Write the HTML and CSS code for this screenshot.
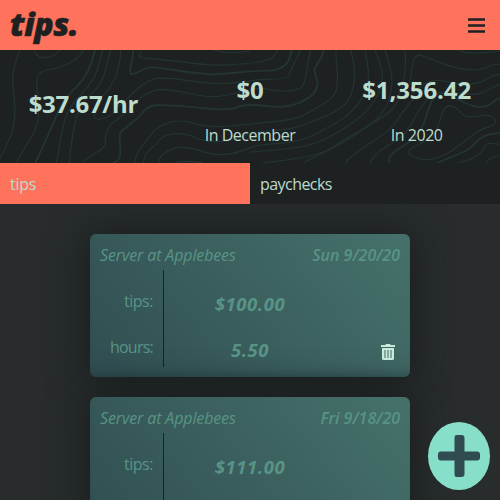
FILE: index.html
```html
<!DOCTYPE html>
<html lang="en">
<head>
<meta charset="utf-8">
<title>tips.</title>
<link rel="stylesheet" href="styles.css">
</head>
<body>
<header class="topbar">
  <h1 class="logo">tips.</h1>
  <svg class="menu" viewBox="0 0 17 15"><path d="M0 1.5h17M0 7.5h17M0 13.5h17"/></svg>
</header>
<section class="summary">
  <svg class="contours" viewBox="0 15 1500 339" preserveAspectRatio="none">
    <path d="M58 15C50 50 35 75 38 110S50 190 42 235S15 310 0 340"/>
    <path d="M102 15C110 45 155 45 180 15"/>
    <path d="M250 15C235 50 180 70 140 75C100 85 112 115 112 150S122 220 105 255S65 320 50 354"/>
    <path class="major" d="M285 15C275 60 260 95 235 120S190 160 170 210S130 300 106 354"/>
    <path d="M308 15C295 65 290 95 260 130S205 180 190 240S180 320 168 354"/>
    <path d="M332 15C320 60 315 110 280 140S230 200 220 260S210 320 208 354"/>
    <path d="M362 15C360 80 335 130 300 160C285 190 275 220 290 222C330 225 340 200 360 180C400 150 420 110 470 100C530 95 600 120 680 115S760 103 800 103S865 100 867 90S890 40 902 15"/>
    <path class="major" d="M399 15C400 40 385 80 392 86C410 95 420 65 460 67C520 72 570 87 640 88C700 86 740 77 800 77S870 45 875 15"/>
    <path d="M425 15C410 40 420 40 450 40C530 45 600 65 680 60S790 52 815 40L835 15"/>
    <path d="M640 15C680 25 700 25 750 18"/>
    <path d="M250 354C260 330 310 320 315 300C315 260 325 240 350 225C400 190 420 140 480 133C550 135 580 155 640 155S750 122 800 132S900 140 910 120S920 60 932 15"/>
    <path class="major" d="M340 354C375 340 355 310 360 265C380 240 420 220 430 200C450 175 480 180 520 182C600 185 650 200 700 190C735 175 770 180 820 185S945 165 952 120C957 100 938 90 945 70S970 40 970 15"/>
    <path d="M403 354C410 310 440 290 460 260C490 230 540 220 580 235C640 255 720 240 790 233S890 225 940 195S1010 160 1012 110S1006 50 1008 15"/>
    <path d="M430 354C435 315 460 310 475 290C495 260 550 260 590 280C640 300 690 290 740 270S850 265 910 240S1030 200 1050 155S1065 60 1052 15"/>
    <path d="M475 354C475 330 510 310 540 307C590 305 600 325 650 328S720 318 760 305S880 302 940 270S1050 220 1085 160S1100 50 1095 15"/>
    <path d="M525 353Q560 345 605 353"/>
    <path d="M750 321C830 315 920 310 970 285S1100 215 1130 155S1145 70 1125 15"/>
    <path d="M785 354C850 345 950 340 1000 305S1145 235 1165 170S1175 80 1155 15"/>
    <path d="M910 354C970 320 1030 300 1080 260S1180 210 1195 160S1220 90 1215 15"/>
    <path d="M1035 354C1070 310 1150 280 1180 240S1210 200 1240 160"/>
    <path d="M1110 354C1130 310 1180 300 1210 270S1250 190 1290 155S1400 160 1440 145S1480 125 1500 118"/>
    <path class="major" d="M1170 354C1155 325 1210 310 1240 280C1280 255 1280 170 1310 150S1385 180 1430 185S1475 165 1500 160"/>
    <path d="M1230 120C1230 90 1240 60 1240 45C1250 20 1275 35 1300 45S1370 75 1420 75S1465 55 1500 58"/>
    <path d="M1372 15C1400 30 1450 25 1500 18"/>
    <path d="M1240 145C1270 110 1300 100 1340 110S1430 120 1455 105S1485 90 1500 88"/>
    <path d="M1230 330C1210 310 1265 300 1295 275S1320 180 1350 182S1375 215 1410 215S1460 205 1475 215S1495 240 1460 248S1400 290 1350 320S1270 350 1230 330Z"/>
    <path class="major" d="M1310 354C1350 335 1400 325 1425 295S1470 270 1500 263"/>
    <path d="M1370 354C1410 345 1440 335 1450 310S1480 300 1500 297M1455 354Q1475 335 1500 330"/>
  </svg>
  <div class="stat rate"><strong>$37.67/hr</strong></div>
  <div class="stat"><strong>$0</strong><span>In December</span></div>
  <div class="stat"><strong class="year">$1,356.42</strong><span>In 2020</span></div>
</section>
<nav class="tabs"><a class="tab active">tips</a><a class="tab">paychecks</a></nav>
<main class="list">
  <article class="card">
    <div class="card-head"><em class="job">Server at Applebees</em><em class="date">Sun 9/20/20</em></div>
    <div class="card-body">
      <div class="labels"><span>tips:</span><span class="hours">hours:</span></div>
      <div class="values"><em>$100.00</em><em>5.50</em></div>
      <svg class="trash" viewBox="0 0 14 16"><path class="solid" d="M0 1h4.2L5 0h4l.8 1H14v2H0zM1 4h12v10.5a1.5 1.5 0 0 1-1.5 1.5h-9A1.5 1.5 0 0 1 1 14.500z"/><path class="slots" d="M4 6v8M7 6v8M10 6v8"/></svg>
    </div>
  </article>
  <article class="card">
    <div class="card-head"><em class="job">Server at Applebees</em><em class="date">Fri 9/18/20</em></div>
    <div class="card-body">
      <div class="labels"><span>tips:</span></div>
      <div class="values"><em>$111.00</em></div>
    </div>
  </article>
</main>
<button class="add" aria-label="Add"><svg viewBox="0 0 42 42"><path d="M18.500 0h5q3 0 3 3v13.500H39q3 0 3 3v3q0 3-3 3H26.500V39q0 3-3 3h-5q-2 0-2-3V25.500H3q-3 0-3-3v-3q0-3 3-3h13.500V3q0-3 2-3z"/></svg></button>
</body>
</html>
```
FILE: styles.css
```css
* { box-sizing: border-box; }
body {
  margin: 0;
  height: 500px;
  overflow: hidden;
  background: #282c2d;
  color: #bcdccd;
  font: 16px/21px "Open Sans", sans-serif;
  letter-spacing: -0.48px;
}
.topbar {
  height: 50px;
  padding: 0 15px 0 10px;
  display: flex;
  align-items: center;
  justify-content: space-between;
  background: #ff735c;
}
.logo {
  margin: 0 0 3px;
  font: italic 800 32px/40px "Open Sans", sans-serif;
  letter-spacing: -0.4px;
  color: #1d2122;
  -webkit-text-stroke: 0.5px #1d2122;
}
.menu { width: 17px; height: 15px; margin-top: 1px; }
.menu path { stroke: #1d2122; stroke-width: 2.6; }
.summary {
  position: relative;
  height: 113px;
  display: grid;
  grid-template-columns: repeat(3, 1fr);
  background: #1d2122;
}
.contours { position: absolute; inset: 0; width: 500px; height: 113px; }
.contours path { fill: none; stroke: #243433; stroke-width: 3.5; }
.contours .major { stroke-width: 5.5; }
.stat {
  position: relative;
  padding-top: 24px;
  display: flex;
  flex-direction: column;
  align-items: center;
  gap: 19px;
}
.stat strong { font-size: 24px; line-height: 32px; letter-spacing: -0.3px; }
.stat .year { letter-spacing: -0.1px; }
.rate { padding-top: 38px; }
.tabs { display: flex; height: 41px; background: #1d2122; }
.tab { flex: 1; padding: 11px 10px 9px; letter-spacing: -0.55px; }
.active { background: #ff735c; letter-spacing: -0.3px; }
.list {
  height: 296px;
  overflow: hidden;
  display: flex;
  flex-direction: column;
  align-items: center;
  gap: 20px;
  padding-top: 30px;
}
.card {
  width: 320px;
  height: 143px;
  flex: none;
  padding: 11px 10px 10px;
  border-radius: 6px;
  background: linear-gradient(50deg, #304e51, #46716b);
  box-shadow: 0 0 40px rgba(20, 23, 24, 0.85), inset 0 -10px 12px -10px rgba(28, 52, 58, 0.6);
  color: #589486;
}
.card-head { height: 25px; display: flex; justify-content: space-between; }
.job { letter-spacing: -0.13px; }
.date { font-weight: 600; letter-spacing: 0; }
.card-body { height: 97px; display: flex; position: relative; }
.labels {
  width: 64px;
  padding: 21px 10px 0 0;
  border-right: 1px solid #1d2122;
  display: flex;
  flex-direction: column;
  align-items: flex-end;
  gap: 25px;
}
.hours { letter-spacing: -0.75px; }
.values {
  width: 172px;
  padding-top: 22px;
  display: flex;
  flex-direction: column;
  align-items: center;
  gap: 22px;
  font-size: 18.5px;
  line-height: 24px;
  font-weight: 700;
  letter-spacing: 0.6px;
}
.trash { position: absolute; right: 5px; bottom: 7px; width: 14px; height: 16px; }
.trash .solid { fill: #c7eadc; }
.trash .slots { stroke: #82a99e; stroke-width: 2; }
.add {
  position: absolute;
  right: 10px;
  bottom: 10px;
  width: 62px;
  height: 68px;
  padding: 0;
  border: 0;
  border-radius: 50%;
  background: #88dfc9;
  display: grid;
  place-items: center;
}
.add svg { width: 42px; height: 42px; fill: #304c50; }
```
